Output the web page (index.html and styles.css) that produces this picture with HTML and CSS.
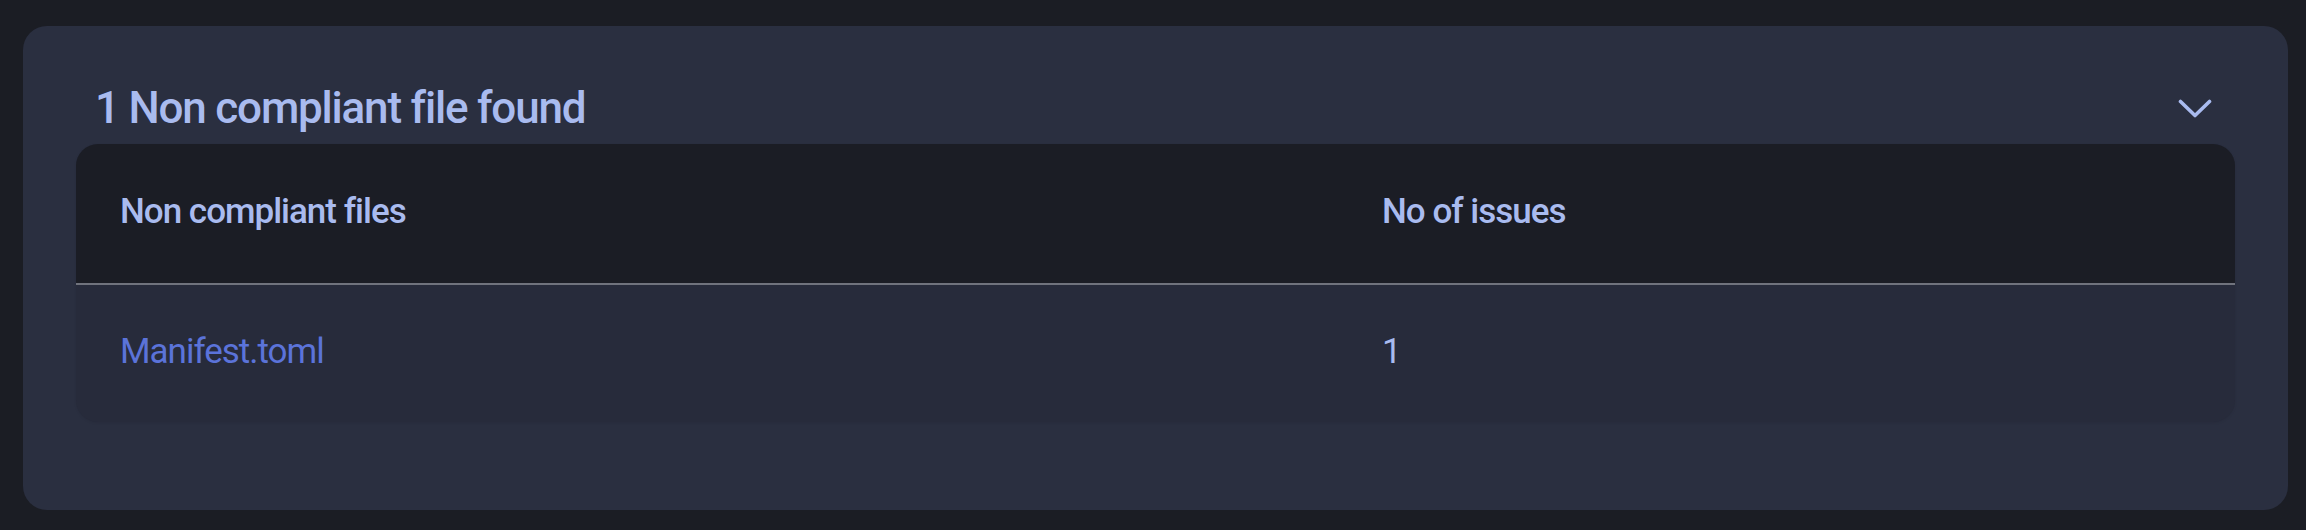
FILE: index.html
```html
<!DOCTYPE html>
<html lang="en">
<head>
<meta charset="utf-8">
<title>Non compliant files</title>
<link rel="stylesheet" href="styles.css">
</head>
<body>
  <section class="card">
    <header class="card-head">
      <h2 class="card-title">1 Non compliant file found</h2>
      <button class="toggle" aria-label="Collapse">
        <svg width="34" height="19" viewBox="0 0 34 19" fill="none">
          <polyline points="2.5,2.5 17,16.5 31.5,2.5" stroke="#a9bbef" stroke-width="3.6" stroke-linecap="round" stroke-linejoin="round"/>
        </svg>
      </button>
    </header>
    <div class="table">
      <div class="row head">
        <div class="cell">Non compliant files</div>
        <div class="cell">No of issues</div>
      </div>
      <div class="row body">
        <div class="cell"><a class="file-link" href="#">Manifest.toml</a></div>
        <div class="cell count">1</div>
      </div>
    </div>
  </section>
</body>
</html>
```

FILE: styles.css
```css
html, body {
  margin: 0;
  padding: 0;
}

body {
  background: #1b1d24;
  padding: 26px 18px 20px 23px;
  font-family: Roboto, "Noto Sans", "Liberation Sans", sans-serif;
  color: #a9bbef;
}

.card {
  background: #2a2f40;
  border-radius: 24px;
  height: 484px;
  box-sizing: border-box;
  padding: 56px 53px 0 53px;
}

.card-head {
  display: flex;
  align-items: center;
  justify-content: space-between;
  padding: 0 23px 0 19px;
  margin-bottom: 10px;
}

.card-title {
  margin: 0;
  font-size: 44px;
  line-height: 52px;
  font-weight: 500;
  color: #a9bbef;
  letter-spacing: -1.2px;
}

.toggle {
  background: none;
  border: 0;
  padding: 0;
  width: 34px;
  height: 19px;
  display: flex;
}

.table {
  border-radius: 22px;
  overflow: hidden;
  background: #272b3b;
  box-shadow: 0 1px 3px rgba(0, 0, 0, 0.08);
}

.row {
  display: grid;
  grid-template-columns: 1262fr 897fr;
}

.row.head {
  background: #1b1d25;
  border-bottom: 2px solid #70737d;
}

.cell {
  padding: 0 44px;
  font-size: 35px;
  line-height: 41px;
  letter-spacing: -1px;
}

.row.head .cell {
  padding-top: 47px;
  padding-bottom: 51px;
  font-weight: 500;
  color: #a9bbef;
}

.row.body .cell {
  padding-top: 46px;
  padding-bottom: 50px;
}

.file-link {
  color: #5b73d9;
  text-decoration: none;
}

.count {
  color: #a9bbef;
}
```
